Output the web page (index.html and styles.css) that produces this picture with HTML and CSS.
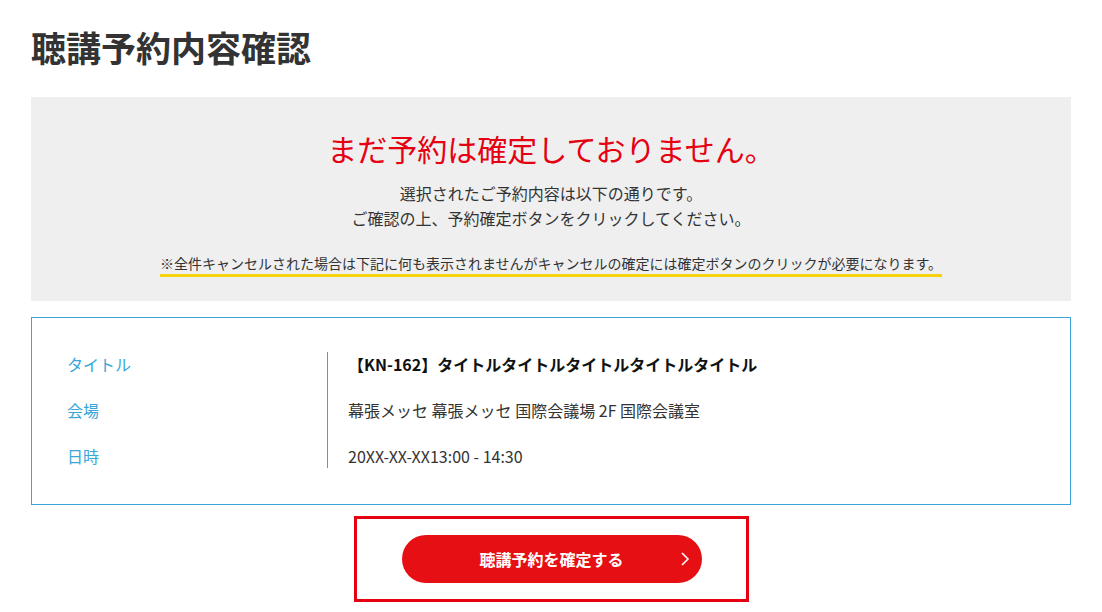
FILE: index.html
```html
<!DOCTYPE html>
<html lang="ja">
<head>
    <meta charset="UTF-8">
    <meta name="viewport" content="width=device-width, initial-scale=1.0">
    <title>聴講予約内容確認</title>
    <link rel="stylesheet" href="styles.css">
</head>
<body>
    <div class="page">
        <h1>聴講予約内容確認</h1>

        <div class="notice">
            <p class="notice-title">まだ予約は確定しておりません。</p>
            <p class="notice-text">選択されたご予約内容は以下の通りです。<br>ご確認の上、予約確定ボタンをクリックしてください。</p>
            <p class="notice-note"><span>※全件キャンセルされた場合は下記に何も表示されませんがキャンセルの確定には確定ボタンのクリックが必要になります。</span></p>
        </div>

        <div class="detail">
            <div class="detail-labels">
                <div>タイトル</div>
                <div>会場</div>
                <div>日時</div>
            </div>
            <div class="detail-values">
                <div class="strong">【KN-162】タイトルタイトルタイトルタイトルタイトル</div>
                <div>幕張メッセ 幕張メッセ 国際会議場 2F 国際会議室</div>
                <div>20XX-XX-XX13:00 - 14:30</div>
            </div>
        </div>

        <div class="action">
            <div class="action-frame">
                <button class="confirm-btn">
                    聴講予約を確定する
                    <svg class="chevron" width="10" height="16" viewBox="0 0 10 16"><path d="M2 2 L8 8 L2 14" fill="none" stroke="#fff" stroke-width="1.6"/></svg>
                </button>
            </div>
        </div>
    </div>
</body>
</html>
```

FILE: styles.css
```css
body {
    font-family: "Noto Sans CJK JP", "Noto Sans", sans-serif;
    margin: 0;
    background-color: #fff;
    color: #333;
}

.page {
    padding: 23px 31px 0;
}

h1 {
    font-size: 35px;
    line-height: 48px;
    font-weight: bold;
    margin: 0 0 26px;
    color: #333;
}

.notice {
    background-color: #efefef;
    text-align: center;
    padding: 31px 20px 24px;
}

.notice p {
    margin: 0;
}

.notice-title {
    font-size: 30px;
    line-height: 40px;
    color: #e50012;
}

.notice-text {
    margin-top: 13px !important;
    font-size: 16px;
    line-height: 25px;
    color: #333;
}

.notice-note {
    margin-top: 21px !important;
    font-size: 14px;
    line-height: 22px;
}

.notice-note span {
    display: inline-block;
    border-bottom: 3px solid #f5d20a;
}

.detail {
    margin-top: 16px;
    border: 1px solid #3aa6d8;
    display: flex;
    padding: 34px 0 36px 35px;
    font-size: 16px;
    line-height: 24px;
}

.detail-labels {
    width: 260px;
    color: #3aa6d8;
    display: flex;
    flex-direction: column;
    gap: 22px;
}

.detail-values {
    border-left: 1px solid #3aa6d8;
    padding-left: 20px;
    display: flex;
    flex-direction: column;
    gap: 22px;
}

.strong {
    font-weight: bold;
    color: #111;
}

.action {
    display: flex;
    justify-content: center;
    margin-top: 11px;
}

.action-frame {
    border: 3px solid #e60012;
    padding: 16px 44px 16px 45px;
}

.confirm-btn {
    position: relative;
    width: 300px;
    height: 48px;
    border: none;
    border-radius: 24px;
    background-color: #e60f14;
    color: #fff;
    font-family: inherit;
    font-size: 16px;
    font-weight: bold;
    cursor: pointer;
}

.chevron {
    position: absolute;
    right: 12px;
    top: 16px;
}
```
